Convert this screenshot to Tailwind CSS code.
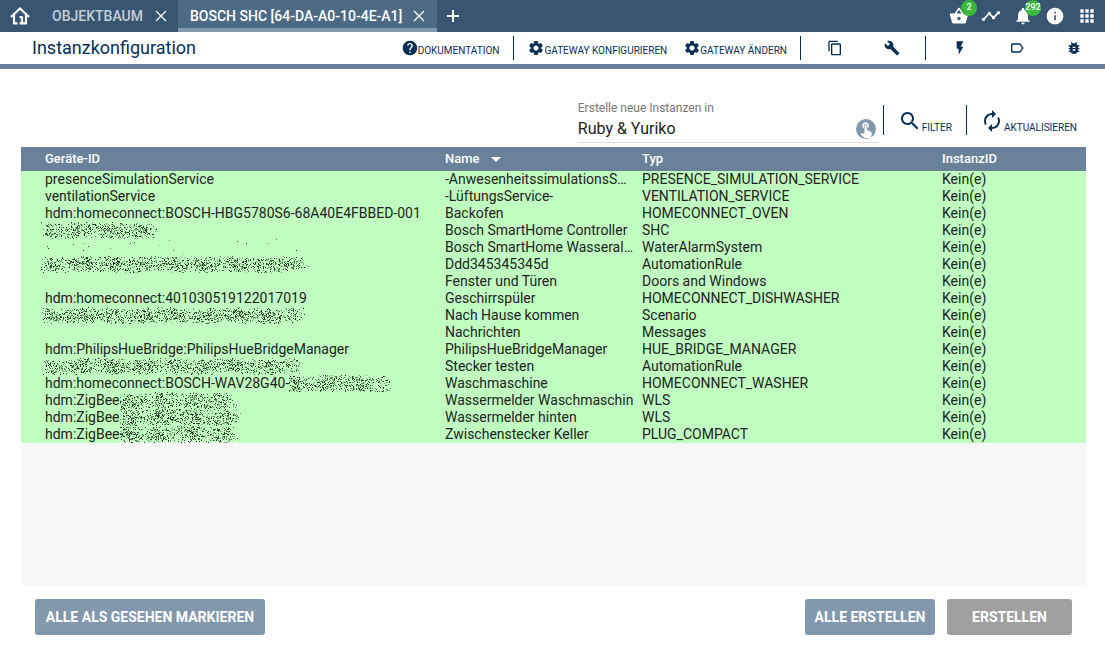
<!DOCTYPE html>
<html lang="de">
<head>
<meta charset="utf-8">
<title>Instanzkonfiguration</title>
<script src="https://cdn.jsdelivr.net/npm/@tailwindcss/browser@4"></script>
</head>
<body class="flex min-h-screen flex-col bg-white font-['Roboto',sans-serif] text-[#062f56]">

<svg class="hidden" aria-hidden="true">
  <symbol id="close" viewBox="0 0 24 24"><path d="M2 2 22 22M22 2 2 22" stroke="currentColor" stroke-width="2.4" fill="none"/></symbol>
  <symbol id="gear" viewBox="1 1 22 22"><path d="M19.14 12.94c.04-.3.06-.61.06-.94 0-.32-.02-.64-.07-.94l2.03-1.58c.18-.14.23-.41.12-.61l-1.92-3.32c-.12-.22-.37-.29-.59-.22l-2.39.96c-.5-.38-1.03-.7-1.62-.94l-.36-2.54c-.04-.24-.24-.41-.48-.41h-3.84c-.24 0-.43.17-.47.41l-.36 2.54c-.59.24-1.13.57-1.62.94l-2.39-.96c-.22-.08-.47 0-.59.22L2.74 8.87c-.12.21-.08.47.12.61l2.03 1.58c-.05.3-.09.63-.09.94s.02.64.07.94l-2.03 1.58c-.18.14-.23.41-.12.61l1.92 3.32c.12.22.37.29.59.22l2.39-.96c.5.38 1.03.7 1.62.94l.36 2.54c.05.24.24.41.48.41h3.84c.24 0 .44-.17.47-.41l.36-2.54c.59-.24 1.13-.56 1.62-.94l2.39.96c.22.08.47 0 .59-.22l1.92-3.32c.12-.22.07-.47-.12-.61l-2.01-1.58zM12 15.6c-1.98 0-3.6-1.62-3.6-3.6s1.62-3.6 3.6-3.6 3.6 1.62 3.6 3.6-1.62 3.6-3.6 3.6z"/></symbol>
</svg>

<header class="flex h-8 items-stretch bg-[#385672] text-white">
  <button class="flex w-[39px] items-center justify-center" aria-label="Start">
    <svg class="size-5" viewBox="0 0 20 20" fill="none" stroke="currentColor" stroke-width="2.2"><path d="M1 11 10 2.500 19 11M4 9v8.300h3.500M16 9v8.300H9.500M12 17v-6.500M9.500 11H12"/></svg>
  </button>
  <nav class="flex items-stretch text-sm font-medium">
    <div class="flex items-center gap-3 pr-[11px] pl-[13px]">
      <button class="text-[#c5cfd8]">OBJEKTBAUM</button>
      <button aria-label="Objektbaum schließen"><svg class="size-3"><use href="#close"/></svg></button>
    </div>
    <div class="flex items-center gap-[11px] border-b-4 border-[#8398ad] bg-[#4d6a84] px-3 pt-1">
      <button>BOSCH SHC [64-DA-A0-10-4E-A1]</button>
      <button aria-label="Bosch SHC schließen"><svg class="size-3"><use href="#close"/></svg></button>
    </div>
    <button class="px-[10px]" aria-label="Neuer Tab"><svg class="size-3" viewBox="0 0 12 12" stroke="currentColor" stroke-width="2"><path d="M6 0v12M0 6h12"/></svg></button>
  </nav>
  <div class="ml-auto flex items-center gap-3 pr-2">
    <button class="relative" aria-label="Warenkorb, 2">
      <svg class="size-5" viewBox="0 0 24 24" fill="currentColor"><path d="M17.210 9l-4.380-6.560c-.19-.28-.51-.42-.83-.42-.32 0-.64.14-.83.43L6.790 9H2c-.55 0-1 .45-1 1 0 .09.010.18.040.27l2.540 9.270c.23.84 1 1.460 1.920 1.460h13c.92 0 1.690-.62 1.930-1.460l2.540-9.270L23 10c0-.55-.45-1-1-1h-4.790zM9 9l3-4.400L15 9H9zm3 8c-1.100 0-2-.9-2-2s.9-2 2-2 2 .9 2 2-.9 2-2 2z"/></svg>
      <span class="absolute -top-[6px] left-3 flex size-4 items-center justify-center rounded-full bg-[#37b93e] text-[9px] font-medium">2</span>
    </button>
    <button aria-label="Verlauf"><svg class="size-5" viewBox="0 0 24 24" fill="currentColor"><path d="M23 8c0 1.100-.9 2-2 2-.18 0-.35-.02-.51-.07l-3.560 3.550c.05.16.07.34.07.52 0 1.100-.9 2-2 2s-2-.9-2-2c0-.18.02-.36.07-.52l-2.550-2.550c-.16.05-.34.07-.52.07s-.36-.02-.52-.07l-4.550 4.560c.05.16.07.33.07.51 0 1.100-.9 2-2 2s-2-.9-2-2 .9-2 2-2c.18 0 .35.02.51.07l4.560-4.550C8.020 9.360 8 9.180 8 9c0-1.100.9-2 2-2s2 .9 2 2c0 .18-.02.36-.07.52l2.550 2.550c.16-.05.34-.07.52-.07s.36.02.52.07l3.550-3.560C19.020 8.350 19 8.180 19 8c0-1.100.9-2 2-2s2 .9 2 2z"/></svg></button>
    <button class="relative" aria-label="Meldungen, 292">
      <svg class="size-5" viewBox="0 0 24 24" fill="currentColor"><path d="M12 22c1.100 0 2-.9 2-2h-4c0 1.100.89 2 2 2zm6-6v-5c0-3.070-1.640-5.640-4.500-6.320V4c0-.83-.67-1.500-1.500-1.500s-1.500.67-1.500 1.500v.68C7.630 5.360 6 7.920 6 11v5l-2 2v1h16v-1l-2-2z"/></svg>
      <span class="absolute -top-[6px] left-3 flex size-4 items-center justify-center rounded-full bg-[#37b93e] text-[9px] font-medium">292</span>
    </button>
    <button aria-label="Info"><svg class="size-5" viewBox="0 0 24 24" fill="currentColor"><path d="M12 2C6.480 2 2 6.480 2 12s4.480 10 10 10 10-4.480 10-10S17.520 2 12 2zm1 15h-2v-6h2v6zm0-8h-2V7h2v2z"/></svg></button>
    <button aria-label="Apps"><svg class="size-5" viewBox="0 0 24 24" fill="currentColor"><path d="M4 8h4V4H4v4zm6 12h4v-4h-4v4zm-6 0h4v-4H4v4zm0-6h4v-4H4v4zm6 0h4v-4h-4v4zm6-10v4h4V4h-4zm-6 4h4V4h-4v4zm6 6h4v-4h-4v4zm0 6h4v-4h-4v4z"/></svg></button>
  </div>
</header>

<div class="flex items-center border-b-[5px] border-[#6a8299] pr-[3px] pl-8">
  <h1 class="text-lg leading-8">Instanzkonfiguration</h1>
  <div class="ml-auto flex items-center text-[10px]">
    <button class="mr-[14px] flex items-center"><svg class="size-4" viewBox="1 1 22 22" fill="currentColor"><path d="M12 2C6.480 2 2 6.480 2 12s4.480 10 10 10 10-4.480 10-10S17.520 2 12 2zm1 17h-2v-2h2v2zm2.070-7.750l-.9.920C13.450 12.900 13 13.500 13 15h-2v-.5c0-1.100.45-2.100 1.170-2.830l1.240-1.260c.37-.36.59-.86.59-1.410 0-1.100-.9-2-2-2s-2 .9-2 2H8c0-2.210 1.790-4 4-4s4 1.790 4 4c0 .88-.36 1.680-.93 2.250z"/></svg><span class="pt-1">DOKUMENTATION</span></button>
    <span class="h-6 w-px bg-[#062f56]"></span>
    <button class="ml-[14px] flex items-center"><svg class="size-4" fill="currentColor"><use href="#gear"/></svg><span class="pt-1">GATEWAY KONFIGURIEREN</span></button>
    <button class="mr-[13px] ml-[17px] flex items-center"><svg class="size-4" fill="currentColor"><use href="#gear"/></svg><span class="pt-1">GATEWAY ÄNDERN</span></button>
    <span class="mr-[5px] h-6 w-px bg-[#062f56]"></span>
    <button class="flex w-[57px] justify-center" aria-label="Kopieren"><svg class="size-4" viewBox="0 0 24 24" fill="currentColor"><path d="M16 1H4c-1.100 0-2 .9-2 2v14h2V3h12V1zm3 4H8c-1.100 0-2 .9-2 2v14c0 1.100.9 2 2 2h11c1.100 0 2-.9 2-2V7c0-1.100-.9-2-2-2zm0 16H8V7h11v14z"/></svg></button>
    <button class="flex w-[57px] justify-center" aria-label="Werkzeuge"><svg class="size-4" viewBox="0 0 24 24" fill="currentColor"><path d="M22.700 19l-9.100-9.100c.9-2.300.4-5-1.500-6.900-2-2-5-2.400-7.400-1.300L9 6 6 9 1.600 4.700C.4 7.100.9 10.100 2.900 12.100c1.900 1.900 4.600 2.400 6.900 1.500l9.100 9.100c.4.4 1 .4 1.400 0l2.300-2.300c.5-.4.5-1.100.1-1.400z"/></svg></button>
    <span class="mx-[5px] h-6 w-px bg-[#062f56]"></span>
    <button class="flex w-[57px] justify-center" aria-label="Ereignisse"><svg class="size-4" viewBox="0 0 24 24" fill="currentColor"><path d="M7 2v11h3v9l7-12h-4l4-8z"/></svg></button>
    <button class="flex w-[57px] justify-center" aria-label="Etikett"><svg class="size-4" viewBox="0 0 24 24" fill="currentColor"><path d="M17.630 5.840C17.270 5.330 16.670 5 16 5L5 5.010C3.900 5.010 3 5.900 3 7v10c0 1.100.9 1.990 2 1.990L16 19c.67 0 1.270-.33 1.630-.84L22 12l-4.370-6.160zM16 17H5V7h11l3.550 5L16 17z"/></svg></button>
    <button class="flex w-[57px] justify-center" aria-label="Debug"><svg class="size-4" viewBox="0 0 24 24" fill="currentColor"><path d="M20 8h-2.810c-.45-.78-1.070-1.450-1.820-1.960L17 4.410 15.590 3l-2.170 2.170C12.960 5.060 12.490 5 12 5c-.49 0-.96.06-1.410.17L8.410 3 7 4.410l1.620 1.630C7.880 6.550 7.260 7.220 6.810 8H4v2h2.090c-.05.33-.09.66-.09 1v1H4v2h2v1c0 .34.04.67.09 1H4v2h2.810c1.040 1.790 2.970 3 5.190 3s4.150-1.210 5.190-3H20v-2h-2.090c.05-.33.09-.66.09-1v-1h2v-2h-2v-1c0-.34-.04-.67-.09-1H20V8zm-6 8h-4v-2h4v2zm0-4h-4v-2h4v2z"/></svg></button>
  </div>
</div>

<main class="flex grow flex-col px-5 pt-8 pb-[22px]">
  <div class="flex items-start justify-end pr-2">
    <div class="mr-[5px] w-[300px] border-b border-[#dcdcdc]">
      <label for="parent" class="block text-xs leading-[14px] text-[#777]">Erstelle neue Instanzen in</label>
      <div class="flex items-center pr-[2px]">
        <input id="parent" value="Ruby &amp; Yuriko" class="h-[27px] min-w-0 grow text-base text-[#222] outline-none">
        <button class="flex size-5 items-center justify-center rounded-full bg-[#8398ad] text-white" aria-label="Auswählen"><svg class="size-[18px]" viewBox="0 0 24 24" fill="currentColor"><path d="M9 11.240V7.500C9 6.120 10.120 5 11.500 5S14 6.120 14 7.500v3.740c1.210-.81 2-2.180 2-3.740C16 5.010 13.990 3 11.500 3S7 5.010 7 7.500c0 1.560.79 2.930 2 3.740zm9.840 4.630l-4.540-2.260c-.17-.07-.35-.11-.54-.11H13v-6c0-.83-.67-1.500-1.500-1.500S10 6.670 10 7.500v10.740l-3.430-.72c-.08-.01-.15-.03-.24-.03-.31 0-.59.13-.79.33l-.79.8 4.940 4.940c.27.27.65.44 1.060.44h6.790c.75 0 1.330-.55 1.440-1.280l.75-5.270c.01-.07.02-.14.02-.2 0-.62-.38-1.160-.91-1.380z"/></svg></button>
      </div>
    </div>
    <span class="mt-1 h-[30px] w-px bg-[#062f56]"></span>
    <button class="mx-[14px] mt-[5px] flex items-center text-[10px]"><svg class="size-6" viewBox="0 0 24 24" fill="currentColor"><path d="M15.500 14h-.79l-.28-.27C15.410 12.590 16 11.110 16 9.500 16 5.910 13.090 3 9.500 3S3 5.910 3 9.500 5.910 16 9.500 16c1.610 0 3.090-.59 4.230-1.570l.27.28v.79l5 4.990L20.490 19l-4.990-5zm-6 0C7.010 14 5 11.990 5 9.500S7.010 5 9.500 5 14 7.010 14 9.500 11.990 14 9.500 14z"/></svg><span class="pt-[14px]">FILTER</span></button>
    <span class="mt-1 h-[30px] w-px bg-[#062f56]"></span>
    <button class="ml-[13px] mt-[5px] flex items-center text-[10px]"><svg class="size-6" viewBox="0 0 24 24" fill="currentColor"><path d="M12 6v3l4-4-4-4v3c-4.420 0-8 3.580-8 8 0 1.570.46 3.030 1.240 4.260L6.700 14.800c-.45-.83-.7-1.790-.7-2.800 0-3.310 2.690-6 6-6zm6.760 1.740L17.300 9.200c.44.84.7 1.790.7 2.800 0 3.310-2.690 6-6 6v-3l-4 4 4 4v-3c4.420 0 8-3.580 8-8 0-1.570-.46-3.030-1.240-4.260z"/></svg><span class="pt-[14px]">AKTUALISIEREN</span></button>
  </div>

  <div class="mr-[-1px] ml-px mt-1 grow bg-[#f7f7f7]">
    <table class="w-full table-fixed border-collapse text-left">
      <colgroup><col class="w-[424px]"><col class="w-[197px]"><col class="w-[300px]"><col></colgroup>
      <thead class="bg-[#6a8299] text-[13px] leading-6 text-white">
        <tr><th class="pl-6 font-medium">Geräte-ID</th><th class="font-medium"><button class="flex items-center gap-[11px]">Name <svg class="h-[5px] w-[10px]" viewBox="0 0 10 5" fill="currentColor"><path d="M0 0h10L5 5z"/></svg></button></th><th class="font-medium">Typ</th><th class="font-medium">InstanzID</th></tr>
      </thead>
      <tbody id="rows" class="bg-[#c0ffc0] text-sm leading-[17px] text-[#222]"></tbody>
    </table>
  </div>

  <div class="mt-[14px] flex gap-3 pr-[13px] pl-[15px] text-sm font-bold text-white">
    <button class="h-9 w-[230px] rounded-[3px] bg-[#8398ad]">ALLE ALS GESEHEN MARKIEREN</button>
    <button class="ml-auto h-9 w-[130px] rounded-[3px] bg-[#8398ad]">ALLE ERSTELLEN</button>
    <button class="h-9 w-[125px] rounded-[3px] bg-[#a0a0a0]">ERSTELLEN</button>
  </div>
</main>

<script>
// id, width of the redacted part, name, type, spray density
const devices = [
  ['presenceSimulationService', 0, '-AnwesenheitssimulationsS…', 'PRESENCE_SIMULATION_SERVICE'],
  ['ventilationService', 0, '-LüftungsService-', 'VENTILATION_SERVICE'],
  ['hdm:homeconnect:BOSCH-HBG5780S6-68A40E4FBBED-001', 0, 'Backofen', 'HOMECONNECT_OVEN'],
  ['', 118, 'Bosch SmartHome Controller', 'SHC', 0.5],
  ['', 262, 'Bosch SmartHome Wasseral…', 'WaterAlarmSystem', 0.006],
  ['', 268, 'Ddd345345345d', 'AutomationRule', 0.5],
  ['', 0, 'Fenster und Türen', 'Doors and Windows'],
  ['hdm:homeconnect:401030519122017019', 0, 'Geschirrspüler', 'HOMECONNECT_DISHWASHER'],
  ['', 264, 'Nach Hause kommen', 'Scenario', 0.5],
  ['', 0, 'Nachrichten', 'Messages'],
  ['hdm:PhilipsHueBridge:PhilipsHueBridgeManager', 0, 'PhilipsHueBridgeManager', 'HUE_BRIDGE_MANAGER'],
  ['', 260, 'Stecker testen', 'AutomationRule', 0.5],
  ['hdm:homeconnect:BOSCH-WAV28G40-', 104, 'Waschmaschine', 'HOMECONNECT_WASHER', 0.42],
  ['hdm:ZigBee', 118, 'Wassermelder Waschmaschin', 'WLS', 0.42],
  ['hdm:ZigBee', 122, 'Wassermelder hinten', 'WLS', 0.42],
  ['hdm:ZigBee', 118, 'Zwischenstecker Keller', 'PLUG_COMPACT', 0.42],
];

let seed = 7;
const random = () => (seed = (seed * 16807) % 2147483647) / 2147483647;

// Spray of dark pixels that thins out towards its edges
function redaction(width, density, squareStart) {
  const canvas = document.createElement('canvas');
  canvas.width = width;
  canvas.height = 17;
  canvas.className = 'h-[17px]';
  const g = canvas.getContext('2d');
  const power = squareStart ? 4 : 2;
  for (let x = 0; x < width; x++) {
    const start = squareStart ? 1 : (x + 1) / 9;
    const ends = Math.min(1, start, (width - x) / 12);
    const wave = 0.8 + 0.2 * Math.sin(x / 5);
    for (let y = 0; y < 17; y++) {
      const middle = Math.max(0, 1 - Math.pow(Math.abs(y - 8 - Math.sin(x / 11)) / 9, power));
      if (random() < density * ends * wave * middle) {
        g.fillStyle = `rgba(10,25,10,${0.25 + random() * 0.75})`;
        g.fillRect(x, y, 1, 1);
      }
    }
  }
  return canvas;
}

// White flecks along the lower edge of the last redacted entry
function addFlecks(canvas) {
  const g = canvas.getContext('2d');
  g.fillStyle = '#fff';
  for (let i = 0; i < 110; i++) {
    g.fillRect(Math.floor(random() * canvas.width), 16 - Math.floor(random() * random() * 6), 1, 1);
  }
}

const body = document.getElementById('rows');
for (const [id, hidden, name, type, density] of devices) {
  const row = body.insertRow();
  const first = row.insertCell();
  first.className = 'p-0';
  const line = document.createElement('div');
  line.className = id ? 'flex h-[17px] pl-6' : 'flex h-[17px] pl-5';
  line.append(id);
  if (hidden) line.append(redaction(hidden, density, id !== ''));
  first.append(line);
  for (const text of [name, type, 'Kein(e)']) {
    const cell = row.insertCell();
    cell.className = 'truncate p-0';
    cell.textContent = text;
  }
}
addFlecks(body.lastElementChild.querySelector('canvas'));
</script>
</body>
</html>
